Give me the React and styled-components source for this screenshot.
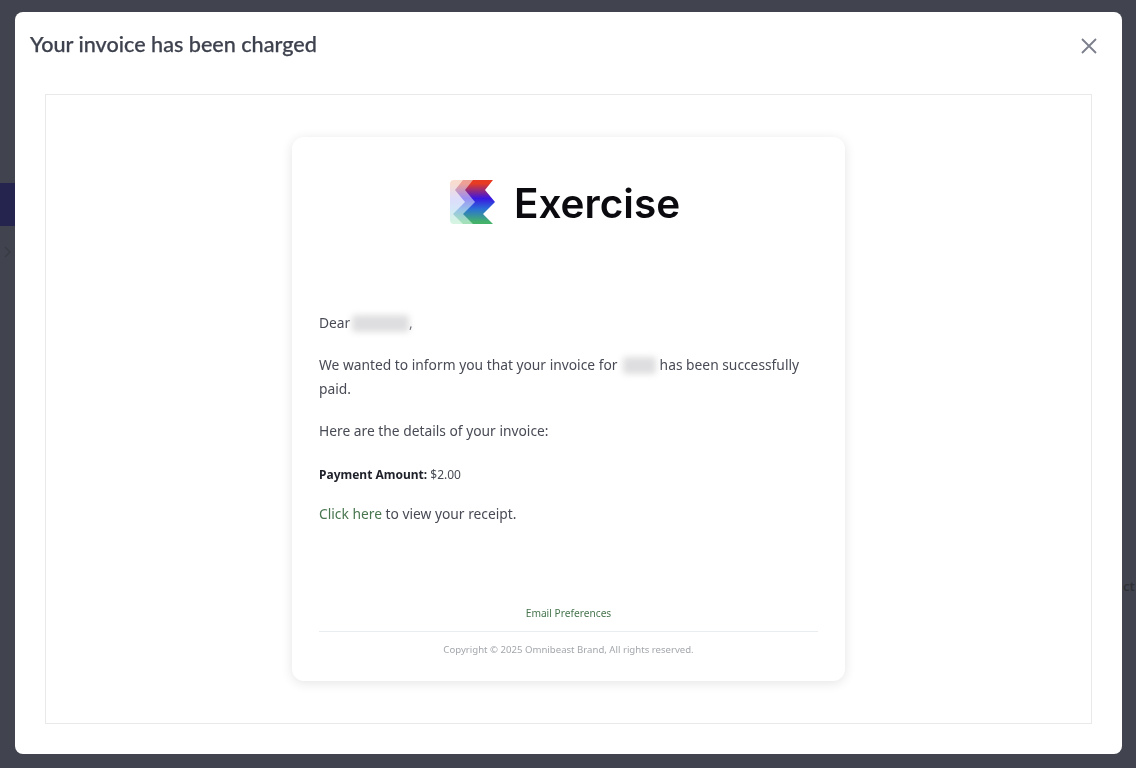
import React from 'react';
import styled, { createGlobalStyle } from 'styled-components';

const GlobalStyle = createGlobalStyle`
	html, body {
		margin: 0;
		padding: 0;
		height: 100%;
		overflow: hidden;
		background: #41444e;
	}
`;

function LogoMark() {
	const layers = [
		{ id: 'back', d: 'M4 1H23L15 11L25 23L13 35L23 45H4Q0 45 0 41V5Q0 1 4 1Z', stops: ['#f9dcd0', '#dedcfb', '#d5e7f8', '#d5f4e2'] },
		{ id: 'mid', d: 'M13 1H33L25 11L35 23L23 35L33 45H13L3 35L15 23L5 11Z', stops: ['#efa094', '#9a8ff3', '#97c0ea', '#a3e0ba'] },
		{ id: 'front', d: 'M23 1H43L35 11L45 23L33 35L43 45H23L13 35L25 23L15 11Z', stops: ['#e73c22', '#3a17e2', '#2a70d6', '#44b26a'] },
	];
	return (
		<MarkSvg width="46" height="46" viewBox="0 0 46 46">
			<defs>
				{layers.map((layer) => (
					<linearGradient key={layer.id} id={layer.id} x1="0" y1="0" x2="0" y2="1">
						<stop offset="0.08" stopColor={layer.stops[0]} />
						<stop offset="0.42" stopColor={layer.stops[1]} />
						<stop offset="0.66" stopColor={layer.stops[2]} />
						<stop offset="0.95" stopColor={layer.stops[3]} />
					</linearGradient>
				))}
			</defs>
			{layers.map((layer) => (
				<path key={layer.id} d={layer.d} fill={`url(#${layer.id})`} />
			))}
		</MarkSvg>
	);
}

function CloseIcon() {
	return (
		<svg width="18" height="18" viewBox="0 0 18 18" fill="none" stroke="#7b7f8c" strokeWidth="1.8">
			<path d="M2 2L16 16M16 2L2 16" />
		</svg>
	);
}

export default function App() {
	return (
		<Page>
			<GlobalStyle />
			<SideBar>
				<ActiveItem />
				<Chevron>
					<svg width="8" height="12" viewBox="0 0 8 12" fill="none" stroke="#383b43" strokeWidth="1.5">
						<path d="M1 1L6 6L1 11" />
					</svg>
				</Chevron>
			</SideBar>
			<PeekText>ct</PeekText>
			<Modal>
				<Header>
					<Title>Your invoice has been charged</Title>
					<CloseButton>
						<CloseIcon />
					</CloseButton>
				</Header>
				<Frame>
					<Card>
						<Logo>
							<LogoMark />
							<LogoText>Exercise</LogoText>
						</Logo>
						<Body>
							<Paragraph>
								Dear <Redacted $width={57} $shift={-2} />,
							</Paragraph>
							<Paragraph>
								We wanted to inform you that your invoice for <Redacted $width={33} $shift={2} /> has been successfully paid.
							</Paragraph>
							<Paragraph>Here are the details of your invoice:</Paragraph>
							<Amount>
								<strong>Payment Amount:</strong> $2.00
							</Amount>
							<Paragraph>
								<GreenLink>Click here</GreenLink> to view your receipt.
							</Paragraph>
						</Body>
						<Footer>
							<FooterLink>Email Preferences</FooterLink>
							<Copyright>Copyright © 2025 Omnibeast Brand, All rights reserved.</Copyright>
						</Footer>
					</Card>
				</Frame>
			</Modal>
		</Page>
	);
}

const Page = styled.div`
	position: relative;
	width: 1136px;
	height: 768px;
	overflow: hidden;
	background: #41444e;
`;

const SideBar = styled.div`
	display: flex;
	flex-direction: column;
	width: 15px;
	padding-top: 183px;
`;

const ActiveItem = styled.div`
	height: 43px;
	background: #25244f;
`;

const Chevron = styled.div`
	display: flex;
	justify-content: center;
	margin-top: 20px;
`;

const PeekText = styled.div`
	position: absolute;
	top: 577px;
	left: 1123px;
	color: #2f3138;
	font: 600 13px 'Noto Sans', sans-serif;
`;

const Modal = styled.div`
	position: absolute;
	top: 12px;
	left: 15px;
	box-sizing: border-box;
	display: flex;
	flex-direction: column;
	width: 1107px;
	height: 742px;
	padding: 0 30px 30px;
	background: #fff;
	border-radius: 8px;
`;

const Header = styled.div`
	display: flex;
	align-items: center;
	justify-content: space-between;
	height: 82px;
	margin-left: -15px;
	padding-bottom: 18px;
	box-sizing: border-box;
`;

const Title = styled.h2`
	margin: 0 0 1px;
	color: #3e424e;
	font: 500 21.6px 'Lato', sans-serif;
	-webkit-text-stroke: 0.25px #3e424e;
	filter: blur(0.3px);
`;

const CloseButton = styled.div`
	display: flex;
	margin-top: 4px;
	margin-right: -6px;
`;

const Frame = styled.div`
	flex: 1;
	display: flex;
	justify-content: center;
	align-items: flex-start;
	padding-top: 42px;
	border: 1px solid #e8e9eb;
`;

const Card = styled.div`
	box-sizing: border-box;
	display: flex;
	flex-direction: column;
	width: 553px;
	height: 544px;
	padding: 0 27px;
	background: #fff;
	border-radius: 12px;
	box-shadow: 0 2px 12px rgba(0, 0, 0, 0.11);
`;

const Logo = styled.div`
	display: flex;
	align-items: center;
	justify-content: center;
	gap: 18px;
	margin-top: 42px;
	padding-right: 7px;
`;

const MarkSvg = styled.svg`
	filter: blur(0.6px);
`;

const LogoText = styled.span`
	margin: 2px 0 -2px;
	color: #0b0b0f;
	font: 600 40.5px/46px 'Inter', sans-serif;
	filter: blur(0.3px);
`;

const Body = styled.div`
	margin-top: 86px;
	color: #484b55;
	font: 400 13.8px/23.5px 'Noto Sans', sans-serif;
	filter: blur(0.3px);
`;

const Paragraph = styled.p`
	margin: 0 0 18.5px;
`;

const Amount = styled.p`
	margin: 0 0 15.5px;
	padding-top: 2px;
	font-size: 12px;

	strong {
		color: #1f212a;
		font-weight: 700;
	}
`;

const Redacted = styled.span`
	display: inline-block;
	width: ${({ $width }) => $width}px;
	height: 17px;
	margin-left: ${({ $shift }) => $shift}px;
	vertical-align: -4px;
	background: #dedee0;
	border-radius: 3px;
	filter: blur(3px);
`;

const GreenLink = styled.span`
	color: #48764f;
`;

const Footer = styled.div`
	margin-top: auto;
	padding-bottom: 25px;
	text-align: center;
	font: 400 9.6px 'Noto Sans', sans-serif;
	filter: blur(0.3px);
`;

const FooterLink = styled.div`
	padding-bottom: 11px;
	color: #48764f;
	font-size: 10.2px;
	border-bottom: 1px solid #e9edf0;
`;

const Copyright = styled.div`
	padding-top: 11px;
	color: #a3a7ac;
`;
